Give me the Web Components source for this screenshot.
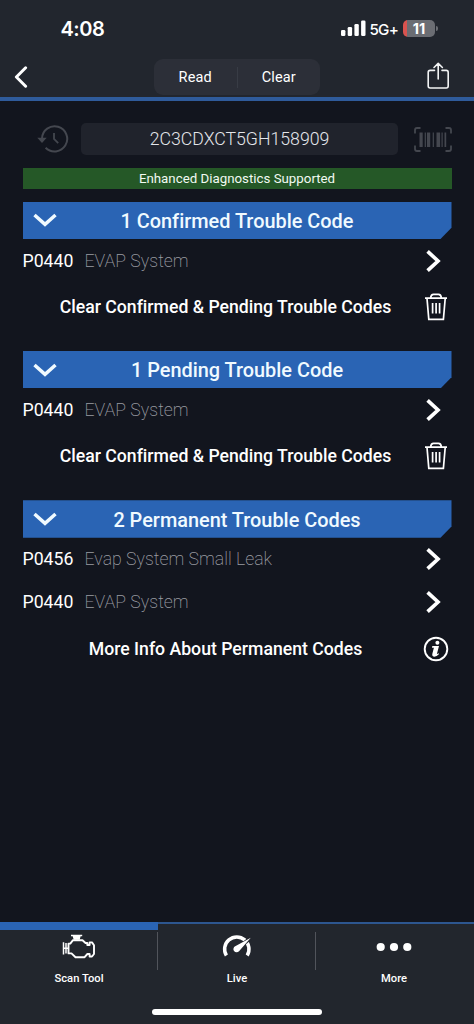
<!DOCTYPE html>
<html lang="en">
<head>
<meta charset="utf-8">
<title>Scan Tool</title>
<style>
html,body{margin:0;height:100%;background:#12151e}
body{font-family:Roboto,"Liberation Sans",sans-serif;color:#fff;font-variant-ligatures:none}
</style>
</head>
<body>
<scan-app></scan-app>
<script>
const define = (name, html, setup) => customElements.define(name, class extends HTMLElement {
  constructor() {
    super();
    this.attachShadow({mode: 'open'}).innerHTML = html;
  }
  connectedCallback() { if (setup) setup(this, this.shadowRoot); }
});

const ICONS = {
  back: [14, 22, '<path d="M11.6 1.8 2.4 11l9.200 9.200" fill="none" stroke="#fff" stroke-width="3" stroke-linecap="round" stroke-linejoin="round"/>'],
  share: [24, 28, '<g fill="none" stroke="#f2f3f4" stroke-width="1.600" stroke-linecap="round" stroke-linejoin="round"><path d="M8.500 8.400H4.200Q2.200 8.400 2.200 10.400V24Q2.200 26 4.200 26H20.200Q22.200 26 22.200 24V10.400Q22.200 8.400 20.200 8.400H16M12.200 17V1.700M8 5.500 12.200 1.400 16.400 5.500"/></g>'],
  history: [32, 28, '<g fill="none" stroke="#44474f" stroke-width="2"><path d="M5 13.500A12.600 12.600 0 1 1 8.600 22.700"/><path d="M17 8v6l4.200 4.200" stroke-width="1.800"/></g><path d="M.3 12.700h9.400L5 18Z" fill="#44474f"/>'],
  barcode: [38, 25, '<g fill="none" stroke="#44474f" stroke-width="1.800"><path d="M1 6.500V3Q1 1 3 1H6.500M31.500 1H35Q37 1 37 3V6.500M37 18.500V22Q37 24 35 24H31.500M6.500 24H3Q1 24 1 22V18.500"/></g><path fill="#44474f" d="M5.500 5.500h3.200v14.500h-3.200zM10.700 5.500h1.200v14.500h-1.200zM13 5.500h3.200v14.500h-3.200zM18.700 5.500h1.200v14.500h-1.200zM22.500 5.500h3.600v14.500h-3.600zM27.500 5.500h1.200v14.500h-1.200zM30.500 5.500h1.700v14.500h-1.700z"/>'],
  down: [24, 14, '<path d="M1.500 2 12 11.300 22.500 2" fill="none" stroke="#f0faff" stroke-width="3.500"/>'],
  next: [15, 22, '<path d="M1.600 1.400 12 11 1.600 20.600" fill="none" stroke="#fff" stroke-width="3.700"/>'],
  trash: [24, 28, '<g fill="none" stroke="#fff" stroke-width="1.700"><path d="M1 5.200H23M3 5.500 4.800 26.300H19.400L21.200 5.500M6.600 5Q7 1.300 9.500 1.300H14.500Q17 1.300 17.400 5M8.600 10V20.500M12.100 10V20.500M15.600 10V20.500"/></g>'],
  info: [26, 26, '<circle cx="13" cy="13" r="11.300" fill="none" stroke="#fff" stroke-width="1.900"/><circle cx="14.400" cy="6.700" r="2" fill="#fff"/><path d="M9.300 10H16L13.900 17.900Q14.200 18.300 15.500 17.300L16.100 18.100Q13.500 21 11 20.800 8.700 20.400 9.400 17.600L10.900 11.700H9Z" fill="#fff"/>'],
  engine: [34, 26, '<g fill="none" stroke="#fff" stroke-width="1.900" stroke-linejoin="round"><path d="M11 6.200H20.500L23.500 9H25.300V11H27.600V8.400H30L32 11.300V20L30 22.500H27.600V20H25.400L22.600 23.200H13.500L9.500 19.400H6.500V9.600H8.300Z"/><path d="M1.500 8.200V20.500M1.500 14.200H6M4 9V19.500" stroke-width="1.500"/></g><path d="M9 .7H20.200V2.300H18.600L17.700 5.800H11.700L10.700 2.300H9Z" fill="#fff"/>'],
  gauge: [30, 26, '<path d="M4.400 21.500A12.200 12.200 0 1 1 25.200 21.500" fill="none" stroke="#fff" stroke-width="3.500"/><path d="M28 4.500 15 15" stroke="#22262d" stroke-width="3.800"/><path d="M28.800 3.700 17 17.300A3.200 3.200 0 1 1 13.200 12.300Z" fill="#fff"/>'],
  dots: [36, 10, '<g fill="#fff"><circle cx="4.700" cy="5" r="4.100"/><circle cx="18" cy="5" r="4.100"/><circle cx="31.300" cy="5" r="4.100"/></g>'],
  signal: [25, 16, '<g fill="#fff"><rect x="0" y="10" width="4.400" height="6" rx="1.300"/><rect x="6.700" y="7" width="4.400" height="9" rx="1.300"/><rect x="13.400" y="4" width="4.400" height="12" rx="1.300"/><rect x="20.100" y=".5" width="4.400" height="15.500" rx="1.300"/></g>']
};

define('app-icon', '<style>:host{display:block;flex:none;line-height:0}svg{display:block}</style><div></div>', (el, root) => {
  const [w, h, body] = ICONS[el.getAttribute('name')];
  root.querySelector('div').innerHTML = `<svg width="${w}" height="${h}" viewBox="0 0 ${w} ${h}">${body}</svg>`;
});

define('status-bar', `<style>
:host{display:flex;box-sizing:border-box;height:56px;padding:0 36px 0 60.500px;justify-content:space-between;align-items:center;font-family:Inter,"Liberation Sans",sans-serif}
.time{font-size:20px;font-weight:600;letter-spacing:-.5px;padding-top:1px}
.right{display:flex;align-items:center}
.net{font-size:15.200px;font-weight:500;letter-spacing:-.8px;margin:2px 5px 0 4px}
.bat{width:32px;height:17px;border-radius:5px;background:linear-gradient(90deg,#d9534f 4px,#6b6d73 4px);font-size:14.500px;line-height:17px;font-weight:700;text-align:center}
.cap{width:2px;height:5px;border-radius:0 2px 2px 0;background:#6b6d73;margin-left:1px}
</style><span class="time">4:08</span><div class="right"><app-icon name="signal"></app-icon><span class="net">5G+</span><span class="bat">11</span><i class="cap"></i></div>`);

define('nav-bar', `<style>
:host{display:grid;grid-template-columns:140px 166px 1fr;align-items:center;height:41px;padding:0 24px 0 14px}
.seg{display:flex;height:36px;border-radius:9px;background:#2c2f38;font-size:14.500px;align-items:center;margin-top:1px}
.seg span{flex:1;text-align:center;letter-spacing:.15px}
.seg i{width:1px;height:21px;background:#383c45}
.share{justify-self:end;margin-bottom:1px}
</style><app-icon name="back"></app-icon><div class="seg"><span>Read</span><i></i><span>Clear</span></div><app-icon class="share" name="share"></app-icon>`);

define('vin-row', `<style>
:host{display:flex;align-items:center;height:32px;padding:0 22px 0 37px}
.vin{width:317px;height:32px;line-height:32px;border-radius:5px;background:#20232c;text-align:center;font-size:17.700px;font-weight:300;color:#e4e6ea;margin:0 16px 0 12px}
</style><app-icon name="history"></app-icon><div class="vin"><slot></slot></div><app-icon name="barcode"></app-icon>`);

define('support-banner', `<style>
:host{display:block;margin:13px 22.500px 0;height:21px;line-height:21px;background:#255827;text-align:center;font-size:13.300px;color:#f2faf2}
</style><slot></slot>`);

define('code-section', `<style>
:host{display:block;margin:0 22.500px 18.900px}
header{display:grid;grid-template-columns:44px 1fr 44px;align-items:center;height:37.500px;background:#2a64b4;clip-path:polygon(0 0,100% 0,100% 70%,calc(100% - 11px) 100%,0 100%)}
app-icon{margin-left:10.500px}
b{font-size:19.900px;font-weight:500;text-align:center;color:#f0faff;white-space:nowrap;padding-top:2px}
</style><header><app-icon name="down"></app-icon><b></b></header><slot></slot>`, (el, root) => {
  root.querySelector('b').textContent = el.getAttribute('heading');
});

define('code-row', `<style>
:host{display:flex;align-items:center;height:43px;font-size:17.700px}
.code{width:62px}
.name{flex:1;font-weight:200;color:#9a9ca2}
app-icon{margin-right:11px}
</style><span class="code"></span><span class="name"><slot></slot></span><app-icon name="next"></app-icon>`, (el, root) => {
  root.querySelector('.code').textContent = el.getAttribute('code');
});

define('action-row', `<style>
:host{display:flex;align-items:center;height:50px;font-size:17.650px;font-weight:500}
.label{flex:1;text-align:center;white-space:nowrap;padding-left:6px}
.icon{width:26px;display:flex;justify-content:center;margin-right:3px}
</style><span class="label"><slot></slot></span><span class="icon"></span>`, (el, root) => {
  root.querySelector('.icon').innerHTML = `<app-icon name="${el.getAttribute('icon')}"></app-icon>`;
});

define('tab-item', `<style>
:host{display:flex;flex:1;flex-direction:column;align-items:center;font-size:11.200px;font-weight:500;border-top:2px solid #2d568f;box-sizing:border-box}
:host([active]){border-top:8px solid #2a64b4}
:host(:last-child){padding-right:2px}
.glyph{height:26px;display:flex;align-items:center;margin-top:10px}
:host([active]) .glyph{margin-top:4px}
.label{margin-top:12px;line-height:14px}
</style><div class="glyph"></div><span class="label"><slot></slot></span>`, (el, root) => {
  root.querySelector('.glyph').innerHTML = `<app-icon name="${el.getAttribute('icon')}"></app-icon>`;
});

define('tab-bar', `<style>
:host{display:block;background:#22262d;height:102px}
.tabs{display:grid;grid-template-columns:158px 0 158px 0 158px;height:87px}
.tabs i{width:1px;height:38px;margin:10px 0 0 -1px;background:#51545b}
.home{width:170px;height:6px;border-radius:3px;background:#fff;margin:0 auto}
</style><div class="tabs"><tab-item active icon="engine">Scan Tool</tab-item><i></i><tab-item icon="gauge">Live</tab-item><i></i><tab-item icon="dots">More</tab-item></div><div class="home"></div>`);

define('scan-app', `<style>
:host{display:flex;flex-direction:column;width:474px;height:1024px;overflow:hidden;background:#12151e}
.top{background:#22262e;border-bottom:4px solid #2f5b9b;height:97px}
main{flex:1;padding-top:22px}
support-banner{margin-bottom:12.500px}
</style>
<div class="top"><status-bar></status-bar><nav-bar></nav-bar></div>
<main>
<vin-row>2C3CDXCT5GH158909</vin-row>
<support-banner>Enhanced Diagnostics Supported</support-banner>
<code-section heading="1 Confirmed Trouble Code"><code-row code="P0440">EVAP System</code-row><action-row icon="trash">Clear Confirmed &amp; Pending Trouble Codes</action-row></code-section>
<code-section heading="1 Pending Trouble Code"><code-row code="P0440">EVAP System</code-row><action-row icon="trash">Clear Confirmed &amp; Pending Trouble Codes</action-row></code-section>
<code-section heading="2 Permanent Trouble Codes"><code-row code="P0456">Evap System Small Leak</code-row><code-row code="P0440">EVAP System</code-row><action-row icon="info">More Info About Permanent Codes</action-row></code-section>
</main>
<tab-bar></tab-bar>`);
</script>
</body>
</html>
